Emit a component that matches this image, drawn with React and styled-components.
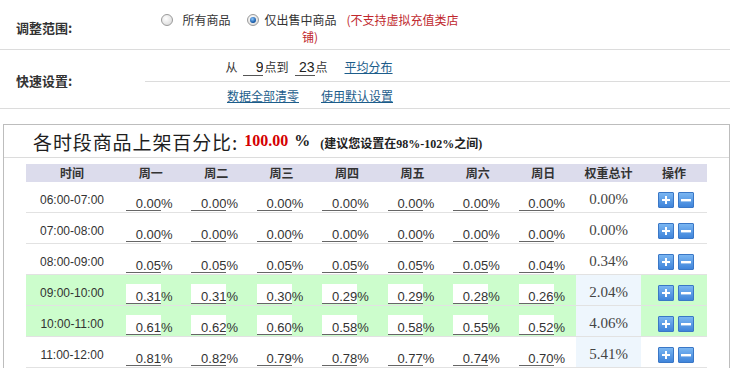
import React from 'react'
import styled, { createGlobalStyle, css } from 'styled-components'

const GlobalStyle = createGlobalStyle`
  html, body {
    margin: 0;
    padding: 0;
    overflow: hidden;
    background: #fff;
  }
  body {
    font-family: "Liberation Sans", "Noto Sans CJK SC", sans-serif;
    font-size: 12px;
    color: #333;
  }
`

const Page = styled.div`
  width: 730px;
`

const FormRow = styled.div`
  display: grid;
  grid-template-columns: 145px 1fr;
  border-bottom: 1px solid #dcdcdc;
`

const Label = styled.div`
  display: flex;
  align-items: center;
  padding-left: 16px;
  padding-top: ${p => p.$offset || 0}px;
  font-family: "Noto Sans CJK SC", sans-serif;
  font-weight: bold;
  font-size: 13px;
  color: #333;
`

const Field = styled.div`
  width: 330px;
  box-sizing: border-box;
  padding: 0 12px;
  text-align: center;
  line-height: 17px;
  font-family: "Noto Sans CJK SC", sans-serif;
`

const ScopeField = styled(Field)`
  height: 49px;
  padding-top: 11px;
`

const SubRows = styled.div`
  display: flex;
  flex-direction: column;
`

const SubRow = styled.div`
  height: ${p => p.$h}px;
  display: flex;
  align-items: center;
  padding-top: ${p => p.$pad || 0}px;
  box-sizing: border-box;
  ${p => p.$line && css`border-bottom: 1px solid #dcdcdc;`}
`

const Option = styled.span`
  margin-right: ${p => p.$gap}px;
  white-space: nowrap;
`

const Radio = styled.span`
  display: inline-block;
  position: relative;
  width: 10px;
  height: 10px;
  border-radius: 50%;
  border: 1px solid #9a9a9a;
  background: radial-gradient(circle at 40% 35%, #ffffff, #d4d4d4);
  vertical-align: -1px;
  margin-right: ${p => p.$gap}px;
  ${p => p.$checked && css`
    &::after {
      content: '';
      position: absolute;
      left: 2px;
      top: 2px;
      width: 6px;
      height: 6px;
      border-radius: 50%;
      background: radial-gradient(circle at 40% 35%, #8cc8ff, #0b4f9e 70%);
    }
  `}
`

const Warn = styled.span`
  color: #c0282d;
`

const QuickLine = styled.div`
  width: 100%;
  display: flex;
  justify-content: center;
  align-items: baseline;
  font-family: "Noto Sans CJK SC", sans-serif;
  padding-right: 2px;
  box-sizing: border-box;
`

const HourInput = styled.input`
  width: 20px;
  height: 17px;
  margin: 0 1px 0 6px;
  padding: 0;
  border: none;
  border-bottom: 1px solid #555;
  background: transparent;
  text-align: right;
  font: 14px "Liberation Sans", sans-serif;
  color: #222;
  outline: none;
`

const Link = styled.a`
  color: #1c5d8b;
  text-decoration: underline;
  margin-left: ${p => p.$gap || 0}px;
  cursor: pointer;
`

const Panel = styled.div`
  margin: 15px 0 0 3px;
  width: 727px;
  box-sizing: border-box;
  border: 1px solid #bdbdbd;
  border-bottom: none;
`

const TitleBar = styled.div`
  height: 32px;
  display: flex;
  align-items: center;
  padding-left: 29px;
  border-bottom: 1px solid #dcdcdc;
`

const Title = styled.span`
  font-family: "Noto Sans CJK SC", sans-serif;
  font-size: 19px;
  color: #1e1e1e;
  letter-spacing: 0.9px;
`

const Total = styled.span`
  font: bold 16px "Liberation Serif", serif;
  color: #d40000;
  margin-left: 6px;
`

const Percent = styled.span`
  font: bold 16px "Liberation Serif", serif;
  color: #222;
  margin-left: 6px;
`

const Hint = styled.span`
  font-family: "Liberation Serif", "Noto Sans CJK SC", serif;
  font-weight: bold;
  font-size: 12px;
  color: #222;
  margin-left: 10px;
  margin-top: 3px;
`

const Table = styled.div`
  margin: 6px 22px 0;
`

const Grid = styled.div`
  display: grid;
  grid-template-columns: 92px repeat(7, 1fr) 65px 66px;
`

const HeadRow = styled(Grid)`
  height: 18px;
  background: #dcdcec;
`

const HeadCell = styled.div`
  text-align: center;
  line-height: 18px;
  font-family: "Noto Sans CJK SC", sans-serif;
  font-weight: bold;
  font-size: 12px;
  color: #333;
`

const BodyRow = styled(Grid)`
  height: 31px;
  box-sizing: border-box;
  border-bottom: 1px solid #e2e2e2;
  background: ${p => (p.$active ? '#ccfdcc' : '#fff')};
`

const TimeCell = styled.div`
  display: flex;
  align-items: center;
  justify-content: center;
  padding-top: 5px;
  font-size: 12px;
  color: #333;
`

const ValueCell = styled.div`
  display: flex;
  align-items: flex-end;
  padding: 0 0 1px 8px;
`

const ValueInput = styled.input`
  width: 35px;
  height: 20px;
  box-sizing: border-box;
  margin: 0;
  padding: 6px 0 0;
  border: none;
  border-bottom: 1px solid #666;
  background: #fff;
  text-align: right;
  font: 13px "Liberation Sans", sans-serif;
  line-height: 13px;
  color: #333;
  outline: none;
`

const Unit = styled.span`
  font: 13px "Liberation Sans", sans-serif;
  line-height: 13px;
  color: #333;
  margin-bottom: 1px;
`

const WeightCell = styled.div`
  display: flex;
  align-items: center;
  justify-content: center;
  padding-top: 5px;
  font: 15px "Liberation Serif", serif;
  color: #444;
  background: ${p => (p.$marked ? '#eef6fd' : 'transparent')};
`

const OpCell = styled.div`
  display: flex;
  align-items: center;
  justify-content: center;
  gap: 4px;
  padding: 5px 0 0 3px;
`

const OpButton = styled.button`
  width: 16px;
  height: 16px;
  padding: 0;
  border: 1px solid #3a77c6;
  border-radius: 1px;
  background: linear-gradient(#7ab6f2, #3f84da);
  display: flex;
  align-items: center;
  justify-content: center;
  cursor: pointer;
`

const PlusIcon = () => (
  <svg width="10" height="10" viewBox="0 0 10 10">
    <path d="M4 1h2v3h3v2H6v3H4V6H1V4h3z" fill="#fff" />
  </svg>
)

const MinusIcon = () => (
  <svg width="12" height="10" viewBox="0 0 12 10">
    <rect x="1" y="4" width="10" height="2.4" fill="#fff" />
  </svg>
)

const days = ['周一', '周二', '周三', '周四', '周五', '周六', '周日']

const rows = [
  { time: '06:00-07:00', values: ['0.00', '0.00', '0.00', '0.00', '0.00', '0.00', '0.00'], total: '0.00' },
  { time: '07:00-08:00', values: ['0.00', '0.00', '0.00', '0.00', '0.00', '0.00', '0.00'], total: '0.00' },
  { time: '08:00-09:00', values: ['0.05', '0.05', '0.05', '0.05', '0.05', '0.05', '0.04'], total: '0.34' },
  { time: '09:00-10:00', values: ['0.31', '0.31', '0.30', '0.29', '0.29', '0.28', '0.26'], total: '2.04', active: true },
  { time: '10:00-11:00', values: ['0.61', '0.62', '0.60', '0.58', '0.58', '0.55', '0.52'], total: '4.06', active: true },
  { time: '11:00-12:00', values: ['0.81', '0.82', '0.79', '0.78', '0.77', '0.74', '0.70'], total: '5.41' },
]

const App = () => (
  <Page>
    <GlobalStyle />
    <FormRow>
      <Label $offset={6}>调整范围:</Label>
      <ScopeField>
        <Option $gap={17}><Radio $gap={9} />所有商品</Option>
        <Option $gap={10}><Radio $gap={5} $checked />仅出售中商品</Option>
        <Warn>(不支持虚拟充值类店铺)</Warn>
      </ScopeField>
    </FormRow>
    <FormRow>
      <Label $offset={2}>快速设置:</Label>
      <SubRows>
        <SubRow $h={32} $pad={3} $line>
          <Field>
            <QuickLine>
              从
              <HourInput readOnly value="9" />
              点到
              <HourInput readOnly value="23" />
              点
              <Link $gap={17}>平均分布</Link>
            </QuickLine>
          </Field>
        </SubRow>
        <SubRow $h={26} $pad={1}>
          <Field>
            <Link>数据全部清零</Link>
            <Link $gap={22}>使用默认设置</Link>
          </Field>
        </SubRow>
      </SubRows>
    </FormRow>

    <Panel>
      <TitleBar>
        <Title>各时段商品上架百分比:</Title>
        <Total>100.00</Total>
        <Percent>%</Percent>
        <Hint>(建议您设置在98%-102%之间)</Hint>
      </TitleBar>
      <Table>
        <HeadRow>
          <HeadCell>时间</HeadCell>
          {days.map(d => <HeadCell key={d}>{d}</HeadCell>)}
          <HeadCell>权重总计</HeadCell>
          <HeadCell>操作</HeadCell>
        </HeadRow>
        {rows.map(row => (
          <BodyRow key={row.time} $active={row.active}>
            <TimeCell>{row.time}</TimeCell>
            {row.values.map((v, i) => (
              <ValueCell key={i}>
                <ValueInput readOnly value={v} />
                <Unit>%</Unit>
              </ValueCell>
            ))}
            <WeightCell $marked={parseFloat(row.total) > 1}>{row.total}%</WeightCell>
            <OpCell>
              <OpButton><PlusIcon /></OpButton>
              <OpButton><MinusIcon /></OpButton>
            </OpCell>
          </BodyRow>
        ))}
      </Table>
    </Panel>
  </Page>
)

export default App
